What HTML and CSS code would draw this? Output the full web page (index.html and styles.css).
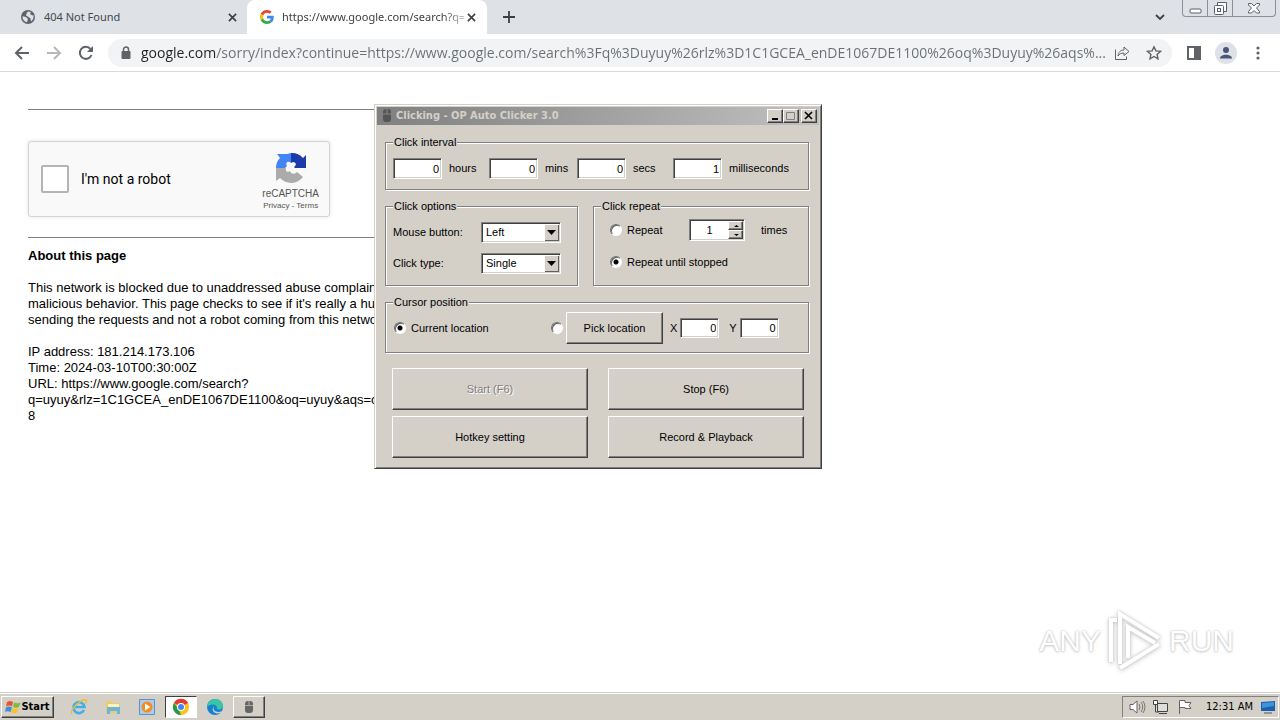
FILE: index.html
```html
<!DOCTYPE html>
<html lang="en">
<head>
<meta charset="utf-8">
<title>https://www.google.com/search?q=</title>
<link rel="stylesheet" href="styles.css">
</head>
<body>
<header class="tabstrip">
  <div class="tab">
    <svg class="icon16" viewBox="0 0 16 16"><circle cx="8" cy="8" r="7" fill="#5f6368"/><path d="M2.5 7.2 6 8l2 2-1 3.2C4 12.8 2.300 10.500 2.500 7.200zM8 2.500l3 .5-1 2 2.500 1.500 1-.5c.5 3-.5 5-2.500 6.500l-.5-3-2-1.500L6 6.500l.5-2z" fill="#dee1e6"/></svg>
    <span class="tab-title">404 Not Found</span>
    <button class="tab-close" aria-label="Close tab"><svg viewBox="0 0 10 10"><path d="M1 1l8 8M9 1L1 9"/></svg></button>
  </div>
  <div class="tab active">
    <svg class="icon16 google" viewBox="0 0 48 48"><path fill="#ea4335" d="M24 9.500c3.500 0 6.700 1.200 9.200 3.600l6.900-6.900C35.900 2.400 30.500 0 24 0 14.600 0 6.500 5.400 2.600 13.200l8 6.200C12.400 13.700 17.700 9.500 24 9.500z"/><path fill="#4285f4" d="M47 24.500c0-1.600-.2-3.100-.4-4.500H24v9h12.900c-.6 3-2.300 5.500-4.800 7.200l7.700 6C44.400 38 47 32 47 24.500z"/><path fill="#fbbc05" d="M10.500 28.600a14.500 14.500 0 0 1 0-9.200l-8-6.200a24 24 0 0 0 0 21.600z"/><path fill="#34a853" d="M24 48c6.500 0 11.900-2.100 15.900-5.800l-7.700-6c-2.200 1.500-4.900 2.300-8.200 2.300-6.300 0-11.600-4.200-13.500-9.900l-8 6.200C6.500 42.600 14.600 48 24 48z"/></svg>
    <span class="tab-title fade">https://www.google.com/search?q=</span>
    <button class="tab-close" aria-label="Close tab"><svg viewBox="0 0 10 10"><path d="M1 1l8 8M9 1L1 9"/></svg></button>
  </div>
  <button class="new-tab" aria-label="New tab"><svg viewBox="0 0 12 12"><path d="M6 0v12M0 6h12"/></svg></button>
  <button class="tab-search" aria-label="Search tabs"><svg viewBox="0 0 10 6"><path d="M1 1l4 4 4-4"/></svg></button>
  <div class="window-controls">
    <button aria-label="Minimize"><svg viewBox="0 0 24 16"><rect x="7" y="9" width="11" height="4" rx="1"/></svg></button>
    <button aria-label="Restore"><svg viewBox="0 0 24 16"><path d="M9.500 5V2.500h9v9H16"/><rect x="6.500" y="5.500" width="9" height="9" rx="1"/><rect x="9.500" y="8.500" width="3" height="3"/></svg></button>
    <button class="wide" aria-label="Close"><svg viewBox="0 0 24 16"><path d="M6.500 3.500h3L12 6l2.500-2.500h3v1.500L14.500 8l3 3.500V13h-3L12 10.500 9.500 13h-3v-1.500l3-3.500-3-3z"/></svg></button>
  </div>
</header>
<nav class="toolbar">
  <button class="tool" aria-label="Back"><svg viewBox="0 0 16 16"><path d="M15 8H2M8 2L2 8l6 6"/></svg></button>
  <button class="tool dim" aria-label="Forward" disabled><svg viewBox="0 0 16 16"><path d="M1 8h13M8 2l6 6-6 6"/></svg></button>
  <button class="tool" aria-label="Reload"><svg viewBox="0 0 16 16"><path d="M13.500 10A6 6 0 1 1 12.500 4"/><path d="M9 7h6V1z" fill="#5f6368" stroke="none"/></svg></button>
  <div class="omnibox">
    <svg class="lock" viewBox="0 0 10 14"><rect x="1" y="5" width="9" height="8" rx="1" fill="#5f6368"/><path d="M3 6V3.500a2.500 2.500 0 0 1 5 0V6" fill="none" stroke="#5f6368" stroke-width="1.500"/></svg>
    <input class="address" aria-label="Address" value="google.com/sorry/index?continue=https://www.google.com/search%3Fq%3Duyuy%26rlz%3D1C1GCEA_enDE1067DE1100%26oq%3Duyuy%26aqs%...">
    <button class="tool" aria-label="Share"><svg class="fine" viewBox="0 0 16 16"><path d="M1.500 4.500v10h11v-3M4 11c.5-4 2.500-6 6-6V2l5 4.500-5 4V8C7 8 5.500 9 4 11z"/></svg></button>
    <button class="tool" aria-label="Bookmark"><svg class="thin" viewBox="0 0 16 16"><path d="M8 1.800l1.900 4.100 4.500.5-3.300 3 .9 4.400L8 11.500l-4 2.300.9-4.400-3.300-3 4.500-.5z"/></svg></button>
  </div>
  <button class="tool" aria-label="Side panel"><svg viewBox="0 0 16 16"><rect x="2" y="2" width="12" height="12"/><path d="M9 2h5v12H9z" fill="#5f6368"/></svg></button>
  <button class="tool avatar" aria-label="Profile"><svg viewBox="0 0 22 22"><circle cx="11" cy="11" r="11" fill="#dee1e6"/><circle cx="11" cy="8" r="3" fill="#4a5578"/><path d="M5 16.500c0-5 12-5 12 0z" fill="#4a5578"/></svg></button>
  <button class="tool" aria-label="Menu"><svg viewBox="0 0 16 16"><g fill="#5f6368" stroke="none"><circle cx="8" cy="3" r="1.600"/><circle cx="8" cy="8" r="1.600"/><circle cx="8" cy="13" r="1.600"/></g></svg></button>
</nav>
<main class="page">
  <div class="notice">
    <hr>
    <div class="captcha">
      <label class="robot"><input type="checkbox">I'm not a robot</label>
      <div class="captcha-brand">
        <svg viewBox="0 0 32 32"><path fill="#1c3aa9" d="M16 1a15 15 0 0 1 12 5l3-3v13H20l-1-1c3-2 2-5-1-5l-2 1z"/><path fill="#4285f4" d="M16 1v10c-3-3-6 0-4 3l-2 2H1C1 12 2 9 5 6L2 2h10z"/><path fill="#ababab" d="M1 29V16h10c-1 3 2 5 4 3 1 3 4 4 7 1l6 5A15 15 0 0 1 5 26z"/></svg>
        <span class="brand-name">reCAPTCHA</span>
        <span class="brand-links"><a href="#">Privacy</a> - <a href="#">Terms</a></span>
      </div>
    </div>
    <hr>
    <div class="about">
      <b>About this page</b><br><br>
      This network is blocked due to unaddressed abuse complaints about<br>
      malicious behavior. This page checks to see if it's really a human<br>
      sending the requests and not a robot coming from this network.<br><br>
      IP address: 181.214.173.106<br>
      Time: 2024-03-10T00:30:00Z<br>
      URL: https://www.google.com/search?<br>
      q=uyuy&amp;rlz=1C1GCEA_enDE1067DE1100&amp;oq=uyuy&amp;aqs=c<br>
      8
    </div>
  </div>
  <div class="watermark">
    <span>ANY</span>
    <svg viewBox="0 0 56 62"><path d="M4 52V10h6M13 54V4l39 24M21 48V17l27 16M13 58l39-24"/></svg>
    <span>RUN</span>
  </div>
</main>
<section class="dialog" aria-label="OP Auto Clicker">
  <div class="titlebar">
    <svg class="mouse" viewBox="0 0 12 14"><rect x="2" y="0" width="8" height="13" rx="3" fill="#555"/><path d="M6 0v5M2 5h8" stroke="#888"/></svg>
    <h1>Clicking - OP Auto Clicker 3.0</h1>
    <div class="caption">
      <button aria-label="Minimize"><svg viewBox="0 0 12 10"><path d="M3 8h6" stroke="#000" stroke-width="2"/></svg></button>
      <button aria-label="Maximize"><svg viewBox="0 0 12 10"><path d="M1.500 1.500h8v7h-8z" fill="none" stroke="#808080"/></svg></button>
      <button class="apart" aria-label="Close"><svg viewBox="0 0 12 10"><path d="M2 1l7 7M9 1L2 8" stroke="#000" stroke-width="1.600"/></svg></button>
    </div>
  </div>
  <div class="client">
    <fieldset>
      <legend>Click interval</legend>
      <div class="interval">
        <label><input class="field" value="0">hours</label>
        <label><input class="field" value="0">mins</label>
        <label><input class="field" value="0">secs</label>
        <label><input class="field" value="1">milliseconds</label>
      </div>
    </fieldset>
    <div class="pair">
      <fieldset>
        <legend>Click options</legend>
        <div class="options">
          <label for="mb">Mouse button:</label>
          <span class="combo"><select id="mb"><option>Left</option><option>Right</option></select><svg viewBox="0 0 15 17"><path d="M3 6h9l-4.500 5z"/></svg></span>
          <label for="ct">Click type:</label>
          <span class="combo"><select id="ct"><option>Single</option><option>Double</option></select><svg viewBox="0 0 15 17"><path d="M3 6h9l-4.500 5z"/></svg></span>
        </div>
      </fieldset>
      <fieldset>
        <legend>Click repeat</legend>
        <div class="repeat">
          <label class="choice"><input type="radio" name="rep">Repeat</label>
          <div class="spinner">
            <input id="times" value="1">
            <div class="steps">
              <button aria-label="More"><svg viewBox="0 0 12 6"><path d="M4 4h5L6.500 2z"/></svg></button>
              <button aria-label="Less"><svg viewBox="0 0 12 6"><path d="M4 2h5L6.500 4z"/></svg></button>
            </div>
          </div>
          <label for="times">times</label>
          <label class="choice all"><input type="radio" name="rep" checked>Repeat until stopped</label>
        </div>
      </fieldset>
    </div>
    <fieldset>
      <legend>Cursor position</legend>
      <div class="cursor">
        <label class="choice"><input type="radio" name="pos" checked>Current location</label>
        <input type="radio" name="pos" aria-label="Picked location">
        <button class="push">Pick location</button>
        <label class="coord">X<input class="field" value="0"></label>
        <label class="coord">Y<input class="field" value="0"></label>
      </div>
    </fieldset>
    <div class="actions">
      <button class="push" disabled>Start (F6)</button>
      <button class="push">Stop (F6)</button>
      <button class="push">Hotkey setting</button>
      <button class="push">Record &amp; Playback</button>
    </div>
  </div>
</section>
<footer class="taskbar">
  <button class="start"><svg viewBox="0 0 16 16"><path fill="#e8542c" d="M2 3c2-1.500 4-1.500 6 0L7 7.500c-2-1.200-4-1.200-6 0z"/><path fill="#7fba3c" d="M9 3.500c2 1 4 1 6.500 0L14 8c-2 1-4 1-6 0z"/><path fill="#3c8ede" d="M1 8.500c2-1.200 4-1.200 6 0L5.500 13c-2-1-4-1-5.500 0z"/><path fill="#fbc02d" d="M7.500 9c2 1 4 1 6 0L12 13.500c-2 1-4 1-6 0z"/></svg>Start</button>
  <button class="task" aria-label="Internet Explorer"><svg viewBox="0 0 18 18"><path d="M14 12a5.500 5.500 0 1 1 .5-3H5" fill="none" stroke="#42aeea" stroke-width="2.600"/><path d="M2 16C-1 12 12 0 16 2c1 .6.500 2-.5 3.500" fill="none" stroke="#e8bd3c" stroke-width="1.400"/></svg></button>
  <button class="task" aria-label="File Explorer"><svg viewBox="0 0 18 18"><path d="M2 3h5l1 2h8v10H2z" fill="#e8cd6a"/><path d="M4 6h11v3H4z" fill="#fdf3b8"/><path d="M3 16V9h13v7h-3v-3H6v3z" fill="#6bb5dc"/></svg></button>
  <button class="task" aria-label="Media Player"><svg viewBox="0 0 18 18"><path d="M1.500 1.500h15v15h-15z" fill="#a9cdeb" stroke="#5a93c8"/><circle cx="9" cy="9" r="5.500" fill="#f58a1f"/><path d="M7 5.500v7L12.500 9z" fill="#fff"/></svg></button>
  <button class="task current" aria-label="Chrome"><svg viewBox="0 0 18 18"><circle cx="9" cy="9" r="8" fill="#fbc116"/><path d="M9 9L2 5a8 8 0 0 1 14 0z" fill="#e33b2e"/><path d="M2 5l5 7 2 5A8 8 0 0 1 2 5z" fill="#229a4b"/><circle cx="9" cy="9" r="4" fill="#fff"/><circle cx="9" cy="9" r="3" fill="#4285f4"/></svg></button>
  <button class="task" aria-label="Edge"><svg viewBox="0 0 18 18"><circle cx="9" cy="9" r="8" fill="#1581d0"/><path d="M1 9c1-10 15-11 16-1 0 3-3 4-6 3 1-5-6-6-10-2z" fill="#38c6a5"/><path d="M8 8c-2 4 2 7 7 5.500l1 .5c-6 4-12-1-8-6z" fill="#d4d0c8"/></svg></button>
  <button class="task raised" aria-label="Auto Clicker"><svg viewBox="0 0 18 18"><rect x="5" y="3" width="8" height="12" rx="3" fill="#666"/><path d="M9 3v4M5 7.500h8" stroke="#aaa"/></svg></button>
  <div class="tray">
    <svg viewBox="0 0 18 16"><path d="M2 5.500h3L9 2v12L5 10.500H2z" fill="#fff" stroke="#666"/><path d="M11 5q2 3 0 6M13 3q3.500 5 0 10M15 2q4 6 0 12" fill="none" stroke="#777"/></svg>
    <svg viewBox="0 0 18 16"><path d="M5.500 4.500h10v8h-10zM7 14.500h8M3.500 6v7H7" fill="#ddd" stroke="#444"/><path d="M1.500 1.500h4v4h-4z" fill="#fff" stroke="#444"/></svg>
    <svg viewBox="0 0 18 16"><path d="M3.500 15V1.500H9v2h6l-2 3 2 3H9v-1H4" fill="#fff" stroke="#666"/></svg>
    <time>12:31 AM</time>
    <svg viewBox="0 0 18 16"><path d="M2 3l14-1v10H2z" fill="#1c5fae"/><path d="M3 4l12-1v4L3 9z" fill="#3f92dc"/><path d="M5 14h8" stroke="#555"/></svg>
  </div>
</footer>
</body>
</html>
```
FILE: styles.css
```css
* { box-sizing: border-box; }
body {
  margin: 0;
  height: 100vh;
  display: flex;
  flex-direction: column;
  overflow: hidden;
  background: #fff;
  color: #000;
  font: 11px/13px "Liberation Sans", Arial, sans-serif;
}
button, input, select { font: inherit; color: inherit; margin: 0; padding: 0; }
button { border: 0; background: none; display: flex; align-items: center; justify-content: center; }
svg { flex: none; }

/* Browser tabs */
.tabstrip { display: flex; height: 34px; background: #dee1e6; flex: none; }
.tab {
  display: flex;
  align-items: center;
  width: 247px;
  padding: 0 8px 0 20px;
  font: 11px/16px "Noto Sans", sans-serif;
  color: #45494d;
}
.tab.active { width: 240px; padding: 0 9px 0 12px; background: #fff; border-radius: 8px 8px 0 0; color: #3c4043; }
.icon16 { width: 16px; height: 16px; margin-right: 8px; }
.google { width: 14px; height: 14px; margin-left: 1px; }
.tab-title { flex: 1; overflow: hidden; white-space: nowrap; }
.fade { mask-image: linear-gradient(90deg, #000 88%, rgba(0, 0, 0, 0.3)); }
.tab-close { width: 14px; height: 16px; }
.tab-close svg { width: 9px; height: 9px; }
.tab-close path, .new-tab path, .tab-search path { fill: none; stroke: #3c4043; stroke-width: 1.8; }
.new-tab { width: 44px; }
.new-tab svg { width: 12px; height: 12px; }
.tab-search { width: 28px; margin-left: auto; }
.tab-search svg { width: 10px; height: 6px; }
.window-controls {
  display: flex;
  height: 17px;
  margin: 0 4px 0 8px;
  border: 1px solid #8b8f99;
  border-top: 0;
  border-radius: 0 0 4px 4px;
}
.window-controls button { width: 25px; border-right: 1px solid #8b8f99; }
.window-controls .wide { width: 42px; border: 0; }
.window-controls svg { width: 24px; height: 16px; fill: #fff; stroke: #5b606b; }

/* Browser toolbar */
.toolbar {
  display: flex;
  align-items: center;
  height: 38px;
  padding: 0 6px;
  background: #fff;
  border-bottom: 1px solid #d8dade;
  flex: none;
}
.tool { width: 32px; height: 28px; flex: none; }
.tool svg { width: 16px; height: 16px; fill: none; stroke: #5f6368; stroke-width: 2; }
.tool.dim svg { stroke: #b6b8bb; }
.tool svg.thin { stroke-width: 1.4; }
.tool svg.fine { stroke-width: 1; }
.tool.avatar svg { width: 22px; height: 22px; stroke: none; }
.omnibox {
  display: flex;
  align-items: center;
  flex: 1;
  min-width: 0;
  height: 28px;
  margin: 0 6px;
  padding: 0 2px 0 12px;
  border-radius: 14px;
  background: #f1f3f4;
}
.lock { width: 11px; height: 14px; margin-right: 10px; }
.address {
  flex: 1;
  min-width: 0;
  height: 24px;
  border: 0;
  outline: 0;
  font: 14px/24px "Open Sans", sans-serif;
  color: #5f6368;
  background: linear-gradient(90deg, #202124 75px, #6b6f74 75px);
  background-clip: text;
  -webkit-text-fill-color: transparent;
}

/* Blocked-network page */
.page { flex: 1; min-height: 0; display: flex; justify-content: space-between; padding: 37px 46px 0 28px; }
.notice { width: 400px; }
hr { margin: 0; border: 0; border-top: 1px solid #808080; }
.captcha {
  display: flex;
  justify-content: space-between;
  width: 302px;
  height: 76px;
  margin: 31px 0 20px;
  padding: 0 10px 0 12px;
  border: 1px solid #d3d3d3;
  border-radius: 3px;
  background: #f9f9f9;
  box-shadow: 0 0 4px #e4e4e4;
}
.robot { display: flex; align-items: center; gap: 12px; font: 14px/17px Roboto, sans-serif; }
.robot input { appearance: none; width: 28px; height: 28px; border: 2px solid #b4b4b4; border-radius: 2px; background: #fff; }
.captcha-brand { display: flex; flex-direction: column; align-items: center; padding-top: 10px; color: #555; }
.captcha-brand svg { width: 32px; height: 32px; }
.brand-name { font: 10px/12px "Liberation Sans", sans-serif; padding-top: 4px; }
.brand-links { font: 8px/12px "Liberation Sans", sans-serif; white-space: nowrap; }
.brand-links a { color: inherit; text-decoration: none; }
.about { padding-top: 10px; font: 13px/16px "Liberation Sans", Arial, sans-serif; white-space: nowrap; }
.watermark {
  display: flex;
  align-items: center;
  align-self: flex-end;
  gap: 6px;
  padding-bottom: 20px;
  font: 30px/48px "Liberation Sans", sans-serif;
  color: #fff;
  text-shadow: 0 0 2px #bbb, 0 1px 3px #ccc;
}
.watermark svg { width: 56px; height: 62px; fill: none; stroke: #fff; stroke-width: 4; filter: drop-shadow(0 0 1px #ccc) drop-shadow(0 1px 2px #ccc); }

/* Auto clicker window, floating over the page */
.dialog {
  position: absolute;
  left: 374px;
  top: 104px;
  width: 448px;
  padding: 1px;
  background: #d4d0c8;
  border: 1px solid;
  border-color: #d4d0c8 #404040 #404040 #d4d0c8;
  box-shadow: inset 1px 1px #fff, inset -1px -1px #808080;
}
.titlebar { display: flex; align-items: center; height: 18px; margin: 1px; padding: 0 2px 0 4px; background: linear-gradient(90deg, #808080, #c0c0c0); color: #d4d0c8; }
.mouse { width: 12px; height: 14px; margin-right: 3px; }
.titlebar h1 { flex: 1; margin: 0; font: bold 11px/16px "DejaVu Sans Condensed", "DejaVu Sans", sans-serif; }
.caption { display: flex; }
.caption button { width: 16px; height: 14px; background: #d4d0c8; }
.caption .apart { margin-left: 2px; }
.caption svg { width: 12px; height: 10px; }
.caption button, .push, .steps button, .start, .raised {
  border: 1px solid;
  border-color: #fff #404040 #404040 #fff;
  box-shadow: inset -1px -1px #808080;
}
.client { display: flex; flex-direction: column; gap: 10px; padding: 10px 11px 9px 9px; }
fieldset {
  margin: 0;
  min-width: 0;
  padding: 0 7px;
  border: 1px solid #808080;
  box-shadow: 1px 1px #fff, inset 1px 1px #fff;
}
legend { padding: 0 1px; background: #d4d0c8; }
.field, .spinner, .combo {
  border: 1px solid;
  border-color: #808080 #fff #fff #808080;
  background: #fff;
  box-shadow: inset 1px 1px #404040, inset -1px -1px #d4d0c8;
}
.interval { display: grid; grid-template-columns: 96px 88px 96px 1fr; padding: 9px 0 10px; }
.interval label { display: flex; align-items: center; gap: 7px; }
.field { width: 49px; height: 21px; padding-right: 2px; text-align: right; }
.pair { display: grid; grid-template-columns: 193px 216px; justify-content: space-between; }
.options { display: grid; grid-template-columns: 88px 80px; row-gap: 10px; align-items: center; padding: 9px 0 11px; }
.combo { position: relative; display: flex; width: 80px; height: 21px; }
.combo select { appearance: none; width: 100%; border: 0; padding-left: 4px; background: none; outline: 0; }
.combo svg {
  position: absolute;
  top: 1px;
  right: 1px;
  width: 15px;
  height: 17px;
  pointer-events: none;
  background: #d4d0c8;
  box-shadow: inset 1px 1px #fff, inset -1px -1px #606060;
}
.repeat { display: grid; grid-template-columns: 63px 56px 1fr; column-gap: 16px; row-gap: 9px; padding: 6px 0 0 9px; align-items: center; }
.choice { display: flex; align-items: center; gap: 5px; white-space: nowrap; }
.all { grid-column: 1 / -1; height: 24px; }
input[type="radio"] {
  appearance: none;
  flex: none;
  width: 12px;
  height: 12px;
  border: 1px solid;
  border-color: #707070 #fff #fff #707070;
  border-radius: 50%;
  background: #fff;
  box-shadow: inset 1px 1px #606060;
}
input[type="radio"]:checked { background: radial-gradient(circle, #000 2px, #fff 3px); }
.spinner { display: flex; height: 22px; padding: 1px; }
.spinner input { width: 100%; min-width: 0; border: 0; background: none; text-align: center; outline: 0; }
.steps { display: flex; flex-direction: column; flex: none; width: 15px; }
.steps button { flex: 1; background: #d4d0c8; }
.steps svg { width: 12px; height: 6px; }
.cursor { display: flex; align-items: center; padding: 3px 0 8px 1px; }
.cursor .choice { width: 157px; }
.cursor .push { width: 97px; height: 32px; margin: 0 7px 0 3px; }
.coord { display: flex; align-items: center; gap: 3px; margin-right: 10px; }
.coord .field { width: 39px; height: 20px; }
.push { height: 42px; background: #d4d0c8; }
.push:disabled { color: #808080; text-shadow: 1px 1px #fff; }
.actions { display: grid; grid-template-columns: 196px 196px; column-gap: 20px; row-gap: 6px; padding: 5px 0 0 7px; }

/* Taskbar */
.taskbar { display: flex; align-items: center; gap: 2px; height: 28px; padding: 1px 1px 0 1px; background: #d4d0c8; border-top: 1px solid #d4d0c8; box-shadow: inset 0 1px #fff; flex: none; }
.start { width: 53px; height: 22px; font: bold 11px/16px "DejaVu Sans Condensed", "DejaVu Sans", sans-serif; }
.start svg { width: 16px; height: 16px; }
.task { width: 32px; height: 22px; }
.start + .task { margin-left: 7px; }
.task svg { width: 18px; height: 18px; }
.current { background: #fff; border: 1px solid; border-color: #404040 #fff #fff #404040; }
.tray {
  display: flex;
  align-items: center;
  gap: 6px;
  height: 22px;
  margin-left: auto;
  padding: 0 1px 0 5px;
  border: 1px solid;
  border-color: #808080 #fff #fff #808080;
}
.tray svg { width: 18px; height: 16px; }
.tray time { padding-left: 6px; white-space: nowrap; font: 11px/16px "DejaVu Sans Condensed", "DejaVu Sans", sans-serif; }
```
